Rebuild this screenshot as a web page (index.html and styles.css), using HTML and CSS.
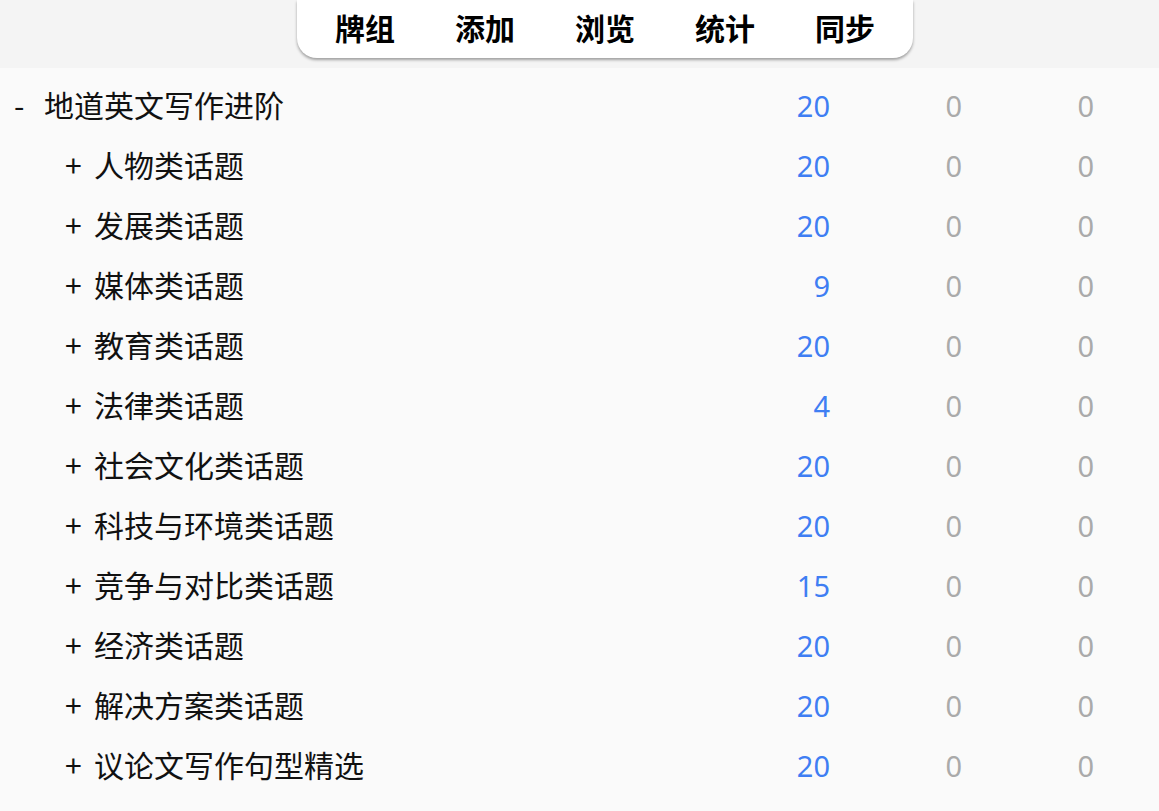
FILE: index.html
```html
<!DOCTYPE html>
<html lang="zh-CN">
<head>
<meta charset="utf-8">
<title>牌组</title>
<link rel="stylesheet" href="styles.css">
</head>
<body>
<header class="topband">
  <nav class="toolbar">
    <span class="tab">牌组</span>
    <span class="tab">添加</span>
    <span class="tab">浏览</span>
    <span class="tab">统计</span>
    <span class="tab">同步</span>
  </nav>
</header>
<main class="decks">
  <div class="row lvl0"><span class="sign">-</span><span class="name">地道英文写作进阶</span><span class="num due">20</span><span class="num">0</span><span class="num">0</span></div>
  <div class="row lvl1"><span class="sign">+</span><span class="name">人物类话题</span><span class="num due">20</span><span class="num">0</span><span class="num">0</span></div>
  <div class="row lvl1"><span class="sign">+</span><span class="name">发展类话题</span><span class="num due">20</span><span class="num">0</span><span class="num">0</span></div>
  <div class="row lvl1"><span class="sign">+</span><span class="name">媒体类话题</span><span class="num due">9</span><span class="num">0</span><span class="num">0</span></div>
  <div class="row lvl1"><span class="sign">+</span><span class="name">教育类话题</span><span class="num due">20</span><span class="num">0</span><span class="num">0</span></div>
  <div class="row lvl1"><span class="sign">+</span><span class="name">法律类话题</span><span class="num due">4</span><span class="num">0</span><span class="num">0</span></div>
  <div class="row lvl1"><span class="sign">+</span><span class="name">社会文化类话题</span><span class="num due">20</span><span class="num">0</span><span class="num">0</span></div>
  <div class="row lvl1"><span class="sign">+</span><span class="name">科技与环境类话题</span><span class="num due">20</span><span class="num">0</span><span class="num">0</span></div>
  <div class="row lvl1"><span class="sign">+</span><span class="name">竞争与对比类话题</span><span class="num due">15</span><span class="num">0</span><span class="num">0</span></div>
  <div class="row lvl1"><span class="sign">+</span><span class="name">经济类话题</span><span class="num due">20</span><span class="num">0</span><span class="num">0</span></div>
  <div class="row lvl1"><span class="sign">+</span><span class="name">解决方案类话题</span><span class="num due">20</span><span class="num">0</span><span class="num">0</span></div>
  <div class="row lvl1"><span class="sign">+</span><span class="name">议论文写作句型精选</span><span class="num due">20</span><span class="num">0</span><span class="num">0</span></div>
</main>
</body>
</html>
```
FILE: styles.css
```css
html, body {
  margin: 0;
  padding: 0;
  background: #fafafa;
  font-family: "Noto Sans CJK SC", "Noto Sans", sans-serif;
  color: #111;
  overflow: hidden;
}

.topband {
  height: 68px;
  background: #f4f4f4;
}

.toolbar {
  margin-left: 297px;
  width: 616px;
  height: 58px;
  box-sizing: border-box;
  padding: 0 8px 4px;
  background: #fff;
  border-radius: 0 0 20px 20px;
  box-shadow: 0 2px 3px rgba(0, 0, 0, 0.35);
  display: flex;
  align-items: center;
}

.tab {
  width: 120px;
  text-align: center;
  font-size: 30px;
  font-weight: 700;
  line-height: 48px;
  color: #000;
}

.decks {
  padding-top: 8px;
}

.row {
  height: 60px;
  display: flex;
  align-items: center;
  padding-right: 65px;
  font-size: 30px;
  line-height: 56px;
}

.sign,
.name {
  padding-bottom: 4px;
}

.lvl0 { padding-left: 14px; }
.lvl0 .sign { width: 30px; }
.lvl1 { padding-left: 65px; }
.lvl1 .sign { width: 29px; }

.name {
  flex: 1;
  color: #111;
}

.num {
  width: 132px;
  text-align: right;
  font-family: "Noto Sans", sans-serif;
  font-size: 29px;
  color: #aaaaaa;
}

.num.due {
  color: #3f7ef3;
}
```
